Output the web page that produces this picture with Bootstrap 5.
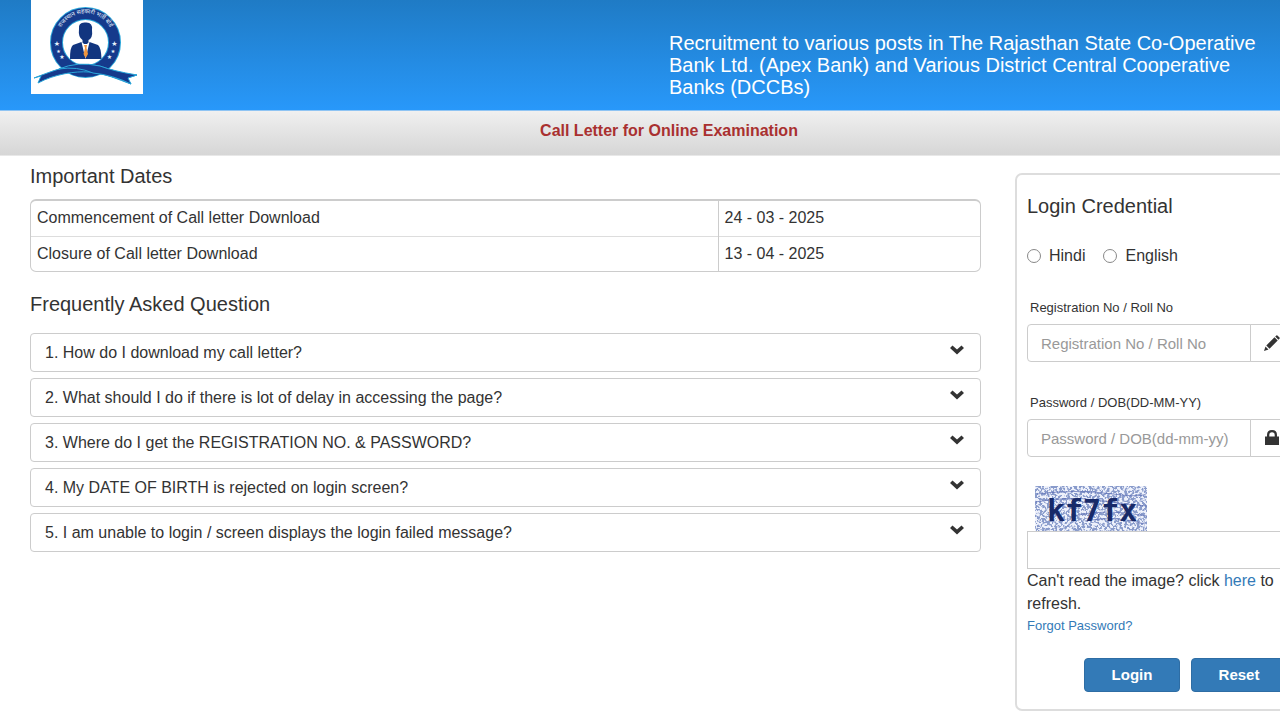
<!DOCTYPE html>
<html lang="en">
<head>
<meta charset="utf-8">
<meta name="viewport" content="width=device-width, initial-scale=1">
<title>Call Letter for Online Examination</title>
<link href="https://cdn.jsdelivr.net/npm/bootstrap@5.3.0/dist/css/bootstrap.min.css" rel="stylesheet">
<style>
body{font-family:"Liberation Sans",Arial,sans-serif;font-size:16px;line-height:22px;color:#333;background:#fff;overflow-x:hidden}
a{color:#337ab7;text-decoration:none}
.page-wrap{width:calc(100% + 58px)}
.site-head{min-height:111px;background:linear-gradient(#1f7bc5,#2898fa);border-bottom:1px solid #8fc4f3}
.logo-cell{padding-left:31px}
.site-logo{width:112px;height:94px;background:#fff;display:block}
.site-title{font-size:20px;line-height:22px;padding:32px 60px 0 0;color:#fff;margin:0}
.sub-bar{min-height:44px;padding:9px 0 13px;background:linear-gradient(#f0f0f0,#d6d6d6);color:#a93030;font-weight:bold;border-bottom:1px solid #e8e8e8}
.main-row{padding:0 30px 8px;gap:34px}
.info-col{padding-top:9px}
.sec-title{font-size:20px;line-height:22px;margin:0;color:#333}
.dates-box{border:1px solid #ccc;border-top-width:2px;border-radius:6px;margin-top:12px;margin-bottom:21px}
.dates-box td{padding:6px;height:35px;line-height:22px}
.dates-box tr+tr td{border-top:1px solid #ddd}
.dates-box td+td{border-left:1px solid #ccc;width:262px}
.faq-list{margin-top:18px;gap:6px}
.faq-btn{border:1px solid #ccc;border-radius:4px;background:#fff;color:#333;height:39px;padding:0 15px 0 14px}
.faq-btn svg{margin-bottom:6px}
.login-panel{width:293px;margin-top:17px;border:2px solid #ddd;border-radius:7px;padding:20px 11px 17px 10px}
.lang-row{margin-top:28px;gap:18px}
.lang-row input{width:14px;height:14px;margin:0 8px 0 0;appearance:none;border:1px solid #888;border-radius:50%;background:#fff}
.lang-row input:checked{border:4px solid #337ab7}
.field-block{margin-top:31px}
.field-label{display:block;font-size:13px;line-height:20px;margin:0 0 6px 3px}
.login-panel .form-control{height:38px;border:1px solid #ccc;border-radius:4px;font-size:15px;padding:6px 13px}
.login-panel .form-control::placeholder{color:#999}
.login-panel .input-group-text{width:45px;background:#fff;border:1px solid #ccc;border-radius:0 4px 4px 0;padding:0 13px}
.login-panel .input-group .form-control{border-radius:4px 0 0 4px}
.login-panel .captcha-input{border-radius:0}
.captcha-pic{width:112px;height:45px;margin:29px 0 0 8px;display:block}
.refresh-note{line-height:23px}
.forgot{font-size:13px;line-height:22px}
.act-row{margin-top:21px;gap:11px}
.act-btn{width:96px;height:34px;border-radius:4px;background:#337ab7;border:1px solid #2e6da4;color:#fff;font-size:15px;font-weight:bold;padding:0}
</style>
</head>
<body>
<div class="page-wrap">
<header class="site-head d-flex">
  <div class="logo-cell w-50">
  <svg class="site-logo" viewBox="0 0 112 94" role="img" aria-label="Rajasthan recruitment board logo">
    <circle cx="54.5" cy="42.500" r="29" fill="none" stroke="#2aa6da" stroke-width="13"/>
    <circle cx="54.5" cy="42.500" r="29" fill="none" stroke="#153a8c" stroke-width="11"/>
    <g stroke="#2aa6da" stroke-width="1" fill="#153a8c">
      <path d="M3 78L10 76L7 83C24 74 44 71 58 72C74 73 88 80 100 84L96 78L106 75C90 74 79 69 68 66C46 61 24 70 3 78Z"/>
      <path d="M28 69Q46 61 69 66Q82 71 106 75L97 78L100 84Q82 75 62 73Q46 66 28 69Z"/>
    </g>
    <g fill="#12357f">
      <path d="M48 29Q47 22 54.500 22.500Q62 22 61 30Q62 38 57.500 40V44H51.500V40Q47 37 48 29Z"/>
      <path d="M39 59Q39 47 42 45L50.500 42L54.500 47L58.500 42L67 45Q70 47 70.500 59Z"/>
    </g>
    <path d="M50.500 42L54.500 59L58.500 42L54.500 45Z" fill="#fff"/>
    <path d="M53 45H56L55.500 48L57 54L54.700 58L52.500 54L54 48Z" fill="#f0953e"/>
    <g fill="#e7f3fc" font-family="DejaVu Sans, sans-serif" text-anchor="middle">
      <text x="26" y="45.500" font-size="7">★</text><text x="83.500" y="45.500" font-size="7">★</text>
      <text x="27.500" y="52.500" font-size="5">★</text><text x="82" y="52.500" font-size="5">★</text>
      <text x="31" y="59" font-size="6">★</text><text x="78.500" y="59" font-size="6">★</text>
    </g>
    <path id="arc" d="M27 36A28 28 0 0 1 82 36" fill="none"/>
    <text font-size="6" fill="#e7f3fc" font-family="Noto Sans Devanagari, Noto Sans, FreeSans, sans-serif" text-anchor="middle"><textPath href="#arc" startOffset="50%">राजस्थान सहकारी भर्ती बोर्ड</textPath></text>
  </svg>
  </div>
  <h1 class="site-title w-50">Recruitment to various posts in The Rajasthan State Co-Operative Bank Ltd. (Apex Bank) and Various District Central Cooperative Banks (DCCBs)</h1>
</header>
<div class="sub-bar text-center">Call Letter for Online Examination</div>

<main class="main-row d-flex align-items-start">
  <div class="info-col flex-grow-1">
    <h2 class="sec-title">Important Dates</h2>
    <div class="dates-box">
      <table class="w-100">
        <tbody>
        <tr><td>Commencement of Call letter Download</td><td>24 - 03 - 2025</td></tr>
        <tr><td>Closure of Call letter Download</td><td>13 - 04 - 2025</td></tr>
        </tbody>
      </table>
    </div>
    <h2 class="sec-title">Frequently Asked Question</h2>
    <div class="faq-list d-flex flex-column">
      <button type="button" class="faq-btn d-flex align-items-center justify-content-between"><span>1. How do I download my call letter?</span><svg width="16" height="10" viewBox="0 0 16 10"><path d="M1 3L3.500 .5L8 4.500L12.500 .5L15 3L8 9.500Z" fill="#333"/></svg></button>
      <button type="button" class="faq-btn d-flex align-items-center justify-content-between"><span>2. What should I do if there is lot of delay in accessing the page?</span><svg width="16" height="10" viewBox="0 0 16 10"><path d="M1 3L3.500 .5L8 4.500L12.500 .5L15 3L8 9.500Z" fill="#333"/></svg></button>
      <button type="button" class="faq-btn d-flex align-items-center justify-content-between"><span>3. Where do I get the REGISTRATION NO. &amp; PASSWORD?</span><svg width="16" height="10" viewBox="0 0 16 10"><path d="M1 3L3.500 .5L8 4.500L12.500 .5L15 3L8 9.500Z" fill="#333"/></svg></button>
      <button type="button" class="faq-btn d-flex align-items-center justify-content-between"><span>4. My DATE OF BIRTH is rejected on login screen?</span><svg width="16" height="10" viewBox="0 0 16 10"><path d="M1 3L3.500 .5L8 4.500L12.500 .5L15 3L8 9.500Z" fill="#333"/></svg></button>
      <button type="button" class="faq-btn d-flex align-items-center justify-content-between"><span>5. I am unable to login / screen displays the login failed message?</span><svg width="16" height="10" viewBox="0 0 16 10"><path d="M1 3L3.500 .5L8 4.500L12.500 .5L15 3L8 9.500Z" fill="#333"/></svg></button>
    </div>
  </div>

  <form class="login-panel flex-shrink-0">
    <h2 class="sec-title">Login Credential</h2>
    <div class="lang-row d-flex">
      <div class="d-flex align-items-center"><input type="radio" name="lang" id="hi"><label for="hi">Hindi</label></div>
      <div class="d-flex align-items-center"><input type="radio" name="lang" id="en"><label for="en">English</label></div>
    </div>
    <div class="field-block">
      <label class="field-label" for="reg">Registration No / Roll No</label>
      <div class="input-group flex-nowrap">
        <input class="form-control" id="reg" type="text" placeholder="Registration No / Roll No">
        <span class="input-group-text"><svg width="16" height="16" viewBox="0 0 16 16" fill="#333"><path d="M0 16L1.500 11.500L4.500 14.500ZM2.300 10.500L10.500 2.300L13.700 5.500L5.500 13.700ZM11.200 1.600L12.400 .4Q12.900 0 13.400 .5L15.500 2.600Q16 3.100 15.600 3.600L14.400 4.800Z"/></svg></span>
      </div>
    </div>
    <div class="field-block">
      <label class="field-label" for="pwd">Password / DOB(DD-MM-YY)</label>
      <div class="input-group flex-nowrap">
        <input class="form-control" id="pwd" type="password" placeholder="Password / DOB(dd-mm-yy)">
        <span class="input-group-text"><svg width="16" height="16" viewBox="0 0 16 16" fill="#333"><path d="M1 6.500H3V5Q3 0 8 0Q13 0 13 5V6.500H15V15H1ZM5.300 6.500H10.700V5Q10.700 2.300 8 2.300Q5.300 2.300 5.300 5Z"/></svg></span>
      </div>
    </div>
    <svg class="captcha-pic" viewBox="0 0 112 45" role="img" aria-label="Captcha image">
      <defs>
        <filter id="speckle" x="0" y="0" width="100%" height="100%">
          <feTurbulence type="fractalNoise" baseFrequency="0.4" numOctaves="2" seed="7"/>
          <feColorMatrix values="0 0 0 0 .25  0 0 0 0 .33  0 0 0 0 .60  9 0 0 0 -4.1"/>
        </filter>
      </defs>
      <rect width="112" height="45" fill="#eef1fb"/>
      <rect width="112" height="45" filter="url(#speckle)"/>
      <g fill="none" stroke="#5568b0" stroke-width="1" opacity=".7"><path d="M2 8Q40 3 78 8T112 4M0 16Q35 10 60 14T112 20M38 30Q70 22 112 30M50 35Q80 29 110 38"/></g>
      <text x="12" y="35" font-family="DejaVu Sans Mono, monospace" font-weight="bold" font-size="30" fill="#182a68">kf7fx</text>
    </svg>
    <input class="form-control captcha-input" type="text" aria-label="Captcha text">
    <div class="refresh-note">Can't read the image? click <a href="#">here</a> to refresh.</div>
    <a class="forgot d-block" href="#">Forgot Password?</a>
    <div class="act-row d-flex justify-content-end pe-2">
      <button type="submit" class="act-btn">Login</button>
      <button type="reset" class="act-btn">Reset</button>
    </div>
  </form>
</main>
</div>
<script src="https://cdn.jsdelivr.net/npm/bootstrap@5.3.0/dist/js/bootstrap.bundle.min.js"></script>
</body>
</html>
